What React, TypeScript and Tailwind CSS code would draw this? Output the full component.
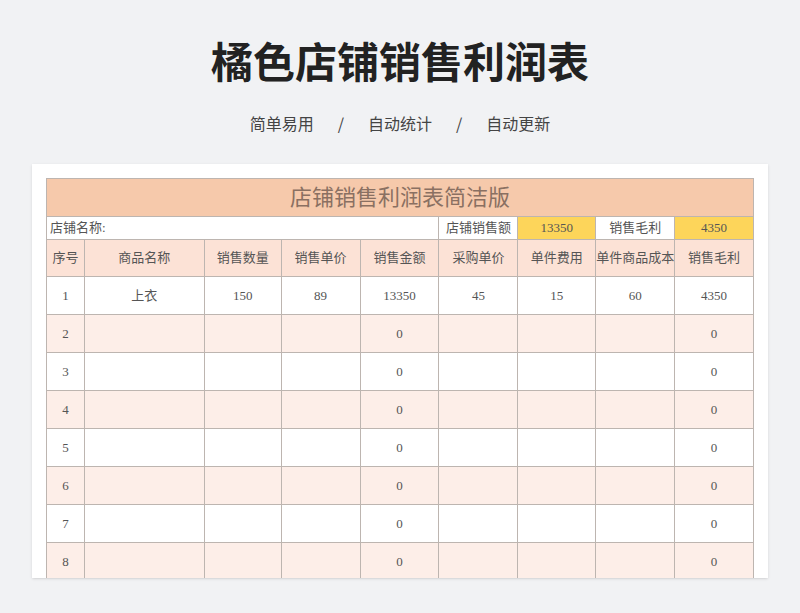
const cols = [38, 120, 77, 79, 79, 79, 78, 79, 79];
const heads = ["序号", "商品名称", "销售数量", "销售单价", "销售金额", "采购单价", "单件费用", "单件商品成本", "销售毛利"];
const rows: string[][] = [
  ["1", "上衣", "150", "89", "13350", "45", "15", "60", "4350"],
  ...[2, 3, 4, 5, 6, 7, 8].map((n) => [String(n), "", "", "", "0", "", "", "", "0"]),
];
const font = { fontFamily: '"Liberation Serif", "Noto Sans CJK SC", serif' };
const cell = "border-r border-b border-[#bdb5b0] flex items-center justify-center overflow-hidden whitespace-nowrap";

export default function App() {
  return (
    <div className="w-[800px] h-[613px] bg-[#f1f2f4] flex flex-col items-center overflow-hidden" style={{ fontFamily: '"Noto Sans CJK SC", sans-serif' }}>
      <h1 className="mt-[33px] text-[42px] leading-[54px] font-bold text-[#222]">橘色店铺销售利润表</h1>
      <div className="mt-[23px] flex gap-[24px] text-[16px] text-[#444] leading-[26px]">
        <span>简单易用</span><span>/</span><span>自动统计</span><span>/</span><span>自动更新</span>
      </div>
      <div className="mt-[28px] w-[736px] h-[414px] bg-white px-[14px] pt-[14px] overflow-hidden shadow-sm" style={font}>
        <div className="border-l border-t border-[#bdb5b0] text-[13px] text-[#555]">
          <div className="h-[38px] bg-[#f6c9ab] border-r border-b border-[#bdb5b0] flex items-center justify-center text-[22px] text-[#8a7062]">店铺销售利润表简洁版</div>
          <div className="flex h-[23px]">
            <div className={`${cell} w-[393px] !justify-start pl-[3px]`}>店铺名称:</div>
            <div className={`${cell} w-[79px]`}>店铺销售额</div>
            <div className={`${cell} w-[78px] bg-[#fdd55a]`}>13350</div>
            <div className={`${cell} w-[79px]`}>销售毛利</div>
            <div className={`${cell} w-[79px] bg-[#fdd55a]`}>4350</div>
          </div>
          <div className="flex h-[37px] bg-[#fce2d6]">
            {heads.map((h, i) => (
              <div key={h} className={cell} style={{ width: cols[i] }}>{h}</div>
            ))}
          </div>
          {rows.map((r, ri) => (
            <div key={ri} className={`flex h-[38px] ${ri % 2 ? "bg-[#fdeee8]" : "bg-white"}`}>
              {r.map((v, i) => (
                <div key={i} className={cell} style={{ width: cols[i] }}>{v}</div>
              ))}
            </div>
          ))}
        </div>
      </div>
    </div>
  );
}
